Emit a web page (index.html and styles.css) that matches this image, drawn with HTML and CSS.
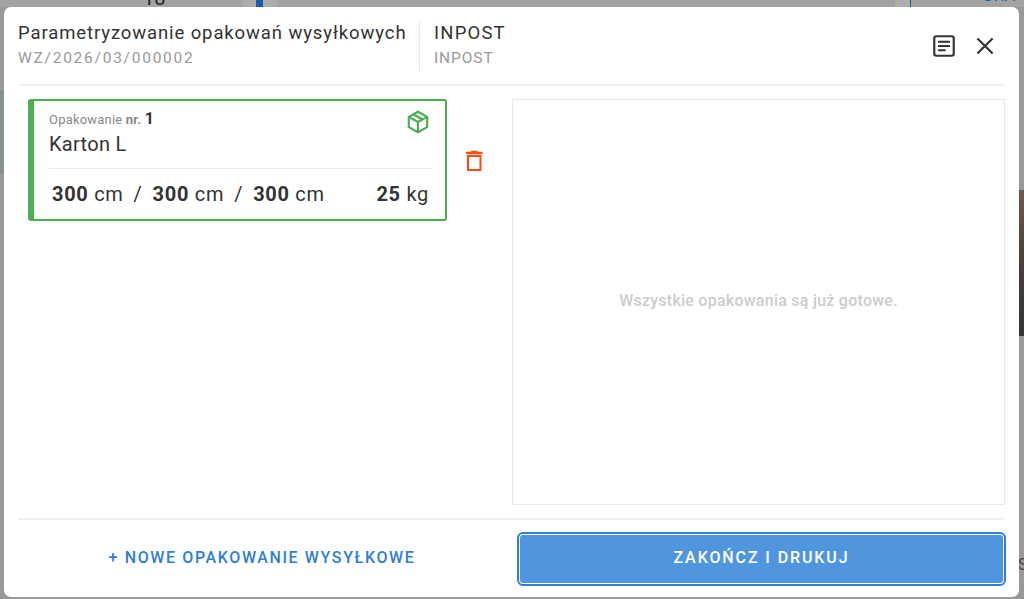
FILE: index.html
```html
<!DOCTYPE html>
<html lang="pl">
<head>
  <meta charset="UTF-8" />
  <title>Parametryzowanie opakowań wysyłkowych</title>
  <link rel="stylesheet" href="styles.css">
</head>
<body>

<div class="backdrop">
  <div class="bg-bits">
    <span class="bit-cell"></span>
    <span class="bit-cell bit-cell-right"></span>
    <span class="bit-qty">18</span>
    <span class="bit-blue"></span>
    <span class="bit-line"></span>
    <span class="bit-text">GRA</span>
  </div>
  <div class="bg-left"></div>
  <div class="bg-right"></div>
  <span class="bit-corner">S</span>

  <div class="dialog">
    <header class="dialog-head">
      <div class="head-block head-main">
        <div class="head-title">Parametryzowanie opakowań wysyłkowych</div>
        <div class="head-sub">WZ/2026/03/000002</div>
      </div>
      <div class="head-block head-carrier">
        <div class="head-title">INPOST</div>
        <div class="head-sub">INPOST</div>
      </div>
      <div class="head-actions">
        <svg class="icon" viewBox="0 0 24 24" width="26" height="26" fill="none">
          <rect x="3" y="3" width="18" height="18" rx="2" stroke="#333" stroke-width="2"/>
          <path d="M6.500 8h11M6.500 12h11M6.500 16h7" stroke="#333" stroke-width="1.800"/>
        </svg>
        <svg class="icon" viewBox="0 0 24 24" width="26" height="26" fill="none">
          <path d="M5 5l14 14M19 5L5 19" stroke="#333" stroke-width="2"/>
        </svg>
      </div>
    </header>

    <main class="dialog-body">
      <div class="packages">
        <div class="package-row">
          <div class="package-card">
            <div class="card-top">
              <div>
                <div class="card-label">Opakowanie <b>nr.</b> <strong>1</strong></div>
                <div class="card-name">Karton L</div>
              </div>
              <svg class="card-icon" viewBox="0 0 24 24" width="26" height="26" fill="none" stroke="#4caf50" stroke-width="2" stroke-linejoin="round">
                <path d="M12 2.500l8.500 4.800v9.400L12 21.500l-8.500-4.800V7.300z"/>
                <path d="M3.500 7.300L12 12l8.500-4.700M12 12v9.500M7.800 4.900l8.400 4.800"/>
              </svg>
            </div>
            <div class="card-dims">
              <div class="dims">
                <span><b>300</b> cm</span><i>/</i>
                <span><b>300</b> cm</span><i>/</i>
                <span><b>300</b> cm</span>
              </div>
              <span><b>25</b> kg</span>
            </div>
          </div>
          <svg class="trash" viewBox="0 0 24 24" width="24" height="24" fill="none">
            <path d="M4 4h16.500" stroke="#ff4d12" stroke-width="2.500"/>
            <path d="M9 2.500h6.500" stroke="#ff4d12" stroke-width="1.500"/>
            <path d="M6 7h12.500v14H6z" stroke="#ff4d12" stroke-width="2"/>
          </svg>
        </div>
      </div>
      <div class="ready-panel">Wszystkie opakowania są już gotowe.</div>
    </main>

    <footer class="dialog-foot">
      <div class="foot-left"><a href="#" class="link-new">+ Nowe opakowanie wysyłkowe</a></div>
      <button class="btn-finish">Zakończ i drukuj</button>
    </footer>
  </div>
</div>

</body>
</html>
```

FILE: styles.css
```css
* { box-sizing: border-box; }
html, body { margin: 0; height: 100%; overflow: hidden; }
body { font-family: Roboto, "Noto Sans", sans-serif; color: #333; }

.backdrop { position: relative; height: 599px; background: #999; padding: 7px 5px 2px 4px; overflow: hidden; }
.bg-bits { position: absolute; inset: 0 0 auto 0; height: 7px; overflow: hidden; background: #a3a3a3; }
.bit-cell { position: absolute; left: 243px; top: 0; width: 34px; height: 7px; background: #adadad; }
.bit-cell-right { left: 895px; width: 15px; }
.bit-qty { position: absolute; left: 143px; top: -14px; font-size: 20px; color: #222; }
.bit-blue { position: absolute; left: 256px; top: 0; width: 7px; height: 7px; background: #1a5ca8; }
.bit-line { position: absolute; left: 910px; top: 0; width: 1px; height: 7px; background: #1a5ca8; }
.bit-text { position: absolute; left: 982px; top: -14px; font-size: 16px; color: #1a5ca8; letter-spacing: 1px; }
.bit-corner { position: absolute; left: 1018px; top: 555px; font-size: 16px; color: #444; }
.bg-left { position: absolute; left: 0; top: 90px; width: 4px; height: 84px; background: #88938a; }
.bg-right { position: absolute; right: 0; top: 190px; width: 5px; height: 146px; background: linear-gradient(#6e5a4c, #4a3f3c 50%, #33343a); }

.dialog { position: relative; height: 590px; background: #fff; border-radius: 7px; display: flex; flex-direction: column; padding: 0 14px; }

.dialog-head { height: 79px; display: flex; align-items: center; border-bottom: 2px solid #f2f2f2; flex: none; }
.head-block { height: 50px; margin-top: 1px; }
.head-main { width: 402px; border-right: 1px solid #e8e8e8; }
.head-carrier { padding-left: 14px; flex: 1; }
.head-title { font-size: 18.500px; line-height: 24px; color: #333; letter-spacing: .89px; }
.head-carrier .head-title { letter-spacing: 1.200px; }
.head-sub { font-size: 15.500px; line-height: 26px; color: #999; letter-spacing: .9px; }
.head-main .head-sub { letter-spacing: 1.750px; }
.head-actions { display: flex; gap: 15px; margin-right: 7px; }

.dialog-body { flex: 1; display: flex; padding-top: 13px; }
.packages { width: 494px; padding-left: 10px; }
.package-row { display: flex; align-items: center; gap: 15px; }
.package-card { width: 419px; height: 122px; border: 2px solid #4caf50; border-left-width: 6px; border-radius: 3px; padding: 8px 13px 0 15px; }
.card-top { display: flex; justify-content: space-between; height: 60px; border-bottom: 1px solid #e8e8e8; }
.card-label { font-size: 13px; line-height: 20px; color: #888; letter-spacing: .2px; }
.card-label strong { font-size: 16px; color: #333; }
.card-name { font-size: 20px; line-height: 28px; color: #333; letter-spacing: .3px; }
.card-icon { margin-right: 1px; }
.card-dims { display: flex; justify-content: space-between; align-items: center; padding: 0 3px; height: 50px; font-size: 20px; letter-spacing: .7px; }
.dims { display: flex; gap: 10px; }
.dims i { font-style: normal; }
.package-card b { font-weight: 700; }
.trash { flex: none; margin-top: 1px; }

.ready-panel { flex: 1; margin-bottom: 13px; padding-bottom: 3px; border: 1px solid #e8e8e8; display: flex; align-items: center; justify-content: center; color: #ccc; font-size: 16px; font-weight: 500; letter-spacing: .25px; }

.dialog-foot { height: 79px; display: flex; align-items: center; border-top: 2px solid #f2f2f2; flex: none; }
.foot-left { width: 500px; padding-right: 12px; padding-bottom: 2px; text-align: center; }
.link-new { color: #2f7fd6; font-size: 16px; font-weight: 500; letter-spacing: 1.620px; text-decoration: none; text-transform: uppercase; }
.btn-finish { width: 487px; height: 52px; margin-right: -1px; padding-bottom: 4px; background: #5096de; color: #fff; border: 2px solid #fff; outline: 2px solid #2f7fd6; outline-offset: -1px; border-radius: 5px; font: 500 16px Roboto, sans-serif; letter-spacing: 1.900px; text-transform: uppercase; }
```
